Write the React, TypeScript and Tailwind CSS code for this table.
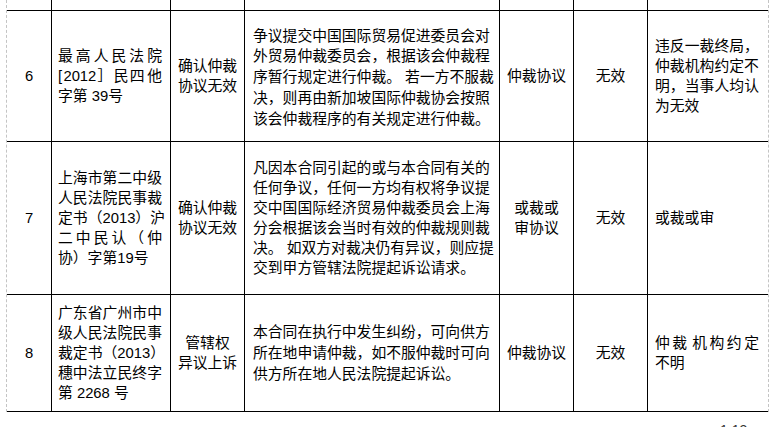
import React from 'react';

const cols = 'grid grid-cols-[44px_119px_74px_255px_74px_74px_121px]';

// a line spread edge to edge: every character (digit runs kept together) is a flex item
const Spread: React.FC<{ text: string }> = ({ text }) => {
  const tokens = text.match(/\d+|./gu) ?? [];
  return (
    <div className="flex justify-between whitespace-nowrap">
      {tokens.map((t, i) => (t === ' ' ? <span key={i} className="w-0" /> : <span key={i}>{t}</span>))}
    </div>
  );
};

const Lines: React.FC<{ lines: string[]; className?: string }> = ({ lines, className = '' }) => (
  <div className={className}>
    {lines.map((l, i) =>
      i < lines.length - 1 ? (
        <Spread key={i} text={l} />
      ) : (
        <div key={i} className="whitespace-nowrap">
          {l}
        </div>
      ),
    )}
  </div>
);

type Row = {
  no: string;
  height: string;
  case: string[];
  type: string[];
  clause: string[];
  clauseLead: string;
  kind: string[];
  result: string;
  note: string[];
};

const rows: Row[] = [
  {
    no: '6',
    height: 'h-[131px]',
    case: ['最高人民法院', '[2012］民四 他', '字第 39号'],
    type: ['确认仲裁', '协议无效'],
    clause: [
      '争议提交中国国际贸易促进委员会对',
      '外贸易仲裁委员会，根据该会仲裁程',
      '序暂行规定进行仲裁。 若一方不服裁',
      '决，则再由新加坡国际仲裁协会按照',
      '该会仲裁程序的有关规定进行仲裁。',
    ],
    clauseLead: 'leading-[20.8px] pt-[3px]',
    kind: ['仲裁协议'],
    result: '无效',
    note: ['违反一 裁终局，', '仲裁 机构约定不', '明，当事人均认', '为无效'],
  },
  {
    no: '7',
    height: 'h-[153px]',
    case: ['上海市第二中级', '人民法院民事裁', '定书（2013）沪', '二中民认（仲', '协）字第19号'],
    type: ['确认仲裁', '协议无效'],
    clause: [
      '凡因本合同引起的或与本合同有关的',
      '任何争议，任何一方均有权将争议提',
      '交中国国际经济贸易仲裁委员会上海',
      '分会根据该会当时有效的仲裁规则裁',
      '决。 如双方对裁决仍有异议，则应提',
      '交到甲方管辖法院提起诉讼请求。',
    ],
    clauseLead: 'leading-[20px]',
    kind: ['或裁或', '审协议'],
    result: '无效',
    note: ['或裁或审'],
  },
  {
    no: '8',
    height: 'h-[117px]',
    case: ['广东省广州市中', '级人民法院民事', '裁定书（2013）', '穗中法立民终字', '第 2268 号'],
    type: ['管辖权', '异议上诉'],
    clause: [
      '本合同在执行中发生纠纷，可向供方',
      '所在地申请仲裁，如不服仲裁时可向',
      '供方所在地人民法院提起诉讼。',
    ],
    clauseLead: 'leading-[21px]',
    kind: ['仲裁协议'],
    result: '无效',
    note: ['仲裁 机构约定', '不明'],
  },
];

const cell = 'border-l border-black flex flex-col justify-center';

const App: React.FC = () => {
  return (
    <div
      lang="zh-CN"
      className="min-h-screen bg-white pl-[6px] text-[14.8px] text-black"
      style={{ fontFamily: '"Liberation Sans", "Noto Sans CJK SC", sans-serif' }}
    >
      <div className="w-[763px] border-x border-dashed border-[#c4c4c4]">
        {/* tail of the row above */}
        <div className={`${cols} h-[11px] border-b border-black`}>
          <div />
          <div className="border-l border-black" />
          <div className="border-l border-black" />
          <div className="border-l border-black" />
          <div className="border-l border-black" />
          <div className="border-l border-black" />
          <div className="border-l border-black" />
        </div>

        {rows.map((r) => (
          <div key={r.no} className={`${cols} ${r.height} border-b border-black`}>
            <div className="flex items-center justify-center">{r.no}</div>
            <div className={`${cell} pl-[6px]`}>
              <Lines lines={r.case} className="w-[104px] leading-[20px]" />
            </div>
            <div className={`${cell} items-center text-center leading-[20px]`}>
              {r.type.map((t) => (
                <div key={t}>{t}</div>
              ))}
            </div>
            <div className={`${cell} pl-[8px]`}>
              <div className={`w-[238px] ${r.clauseLead}`}>
                {r.clause.map((l) => (
                  <div key={l} className="whitespace-nowrap">
                    {l}
                  </div>
                ))}
              </div>
            </div>
            <div className={`${cell} items-center text-center leading-[20px]`}>
              {r.kind.map((t) => (
                <div key={t}>{t}</div>
              ))}
            </div>
            <div className={`${cell} items-center`}>{r.result}</div>
            <div className={`${cell} pl-[7px]`}>
              <Lines lines={r.note} className="w-[104px] leading-[20px]" />
            </div>
          </div>
        ))}
      </div>
      <div className="pl-[714px] pt-[11px] text-[14px] leading-none text-[#333]">1 13</div>
    </div>
  );
};

export default App;
